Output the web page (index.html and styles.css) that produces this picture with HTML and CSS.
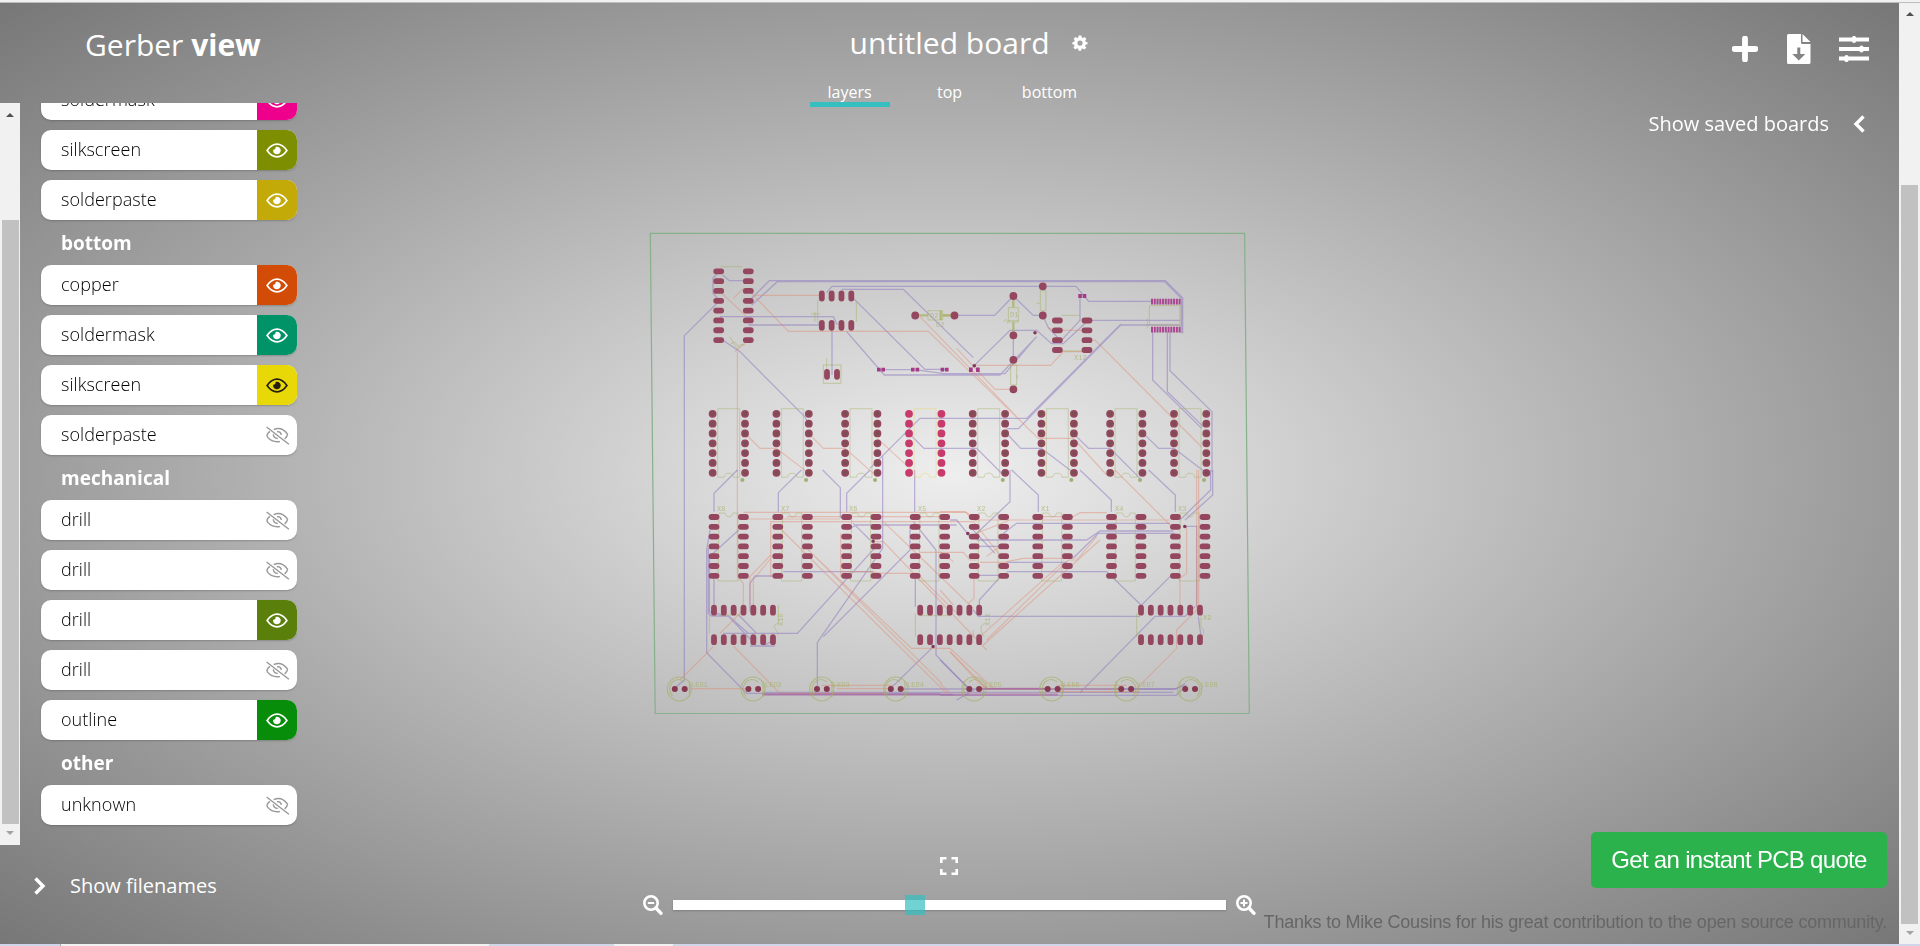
FILE: index.html
```html
<!DOCTYPE html>
<html lang="en">
<head>
<meta charset="utf-8">
<title>Gerber view</title>
<link rel="stylesheet" href="styles.css">
</head>
<body>
<svg class="defs" aria-hidden="true">
  <defs>
    <symbol id="eye" viewBox="0 0 24 18"><path d="M1.2 9Q6 2.1 12 2.1T22.800 9Q18 15.900 12 15.900T1.200 9z" fill="none" stroke="currentColor" stroke-width="1.800"/><path d="M12 4.800a4.200 4.200 0 1 1-4.200 3.300q2.600.7 2.900-3.100Q11.300 4.800 12 4.800z" fill="currentColor"/></symbol>
    <symbol id="eye-off" viewBox="0 0 26 20"><g fill="none" stroke="currentColor" stroke-width="1.500"><path d="M1.500 1L25 19.200M9 3.900Q17-.2 23.600 8.500 23.500 11 20.500 13.600M5 5.700Q.5 9 2.800 12 7.500 17.600 15.500 16.300M12.500 6q4-.5 4.600 3.400M8.600 8.700q.2 4.300 4.700 4.500"/></g></symbol>
  </defs>
</svg>
<div class="top-edge"></div>
<div class="window">
  <div class="view">
    <svg class="board" viewBox="0 0 1899 941">
      <defs>
        <path id="h4" d="M-2.500 0h5m-5 9.830h5m-5 9.830h5m-5 9.830h5"/>
        <path id="h7" d="M-2.500 0h5m-5 9.800h5m-5 9.800h5m-5 9.800h5m-5 9.800h5m-5 9.800h5m-5 9.800h5"/>
        <path id="v4" d="M0-2.500v5m9.830-5v5m9.830-5v5m9.830-5v5"/>
        <path id="v7" d="M0-2.500v5m9.830-5v5m9.830-5v5m9.830-5v5m9.830-5v5m9.830-5v5m9.830-5v5"/>
        <path id="c7" d="M0 0h.01m0 9.830h.01m0 9.830h.01m0 9.830h.01m0 9.830h.01m0 9.830h.01m0 9.830h.01"/>
        <path id="body7" d="M5 63.500V-5H27V63.500H20.500q0-4-4.500-4t-4.500 4H5"/>
        <path id="chip7" d="M5-4H11q1 4 4 4t4-4H24V64H4z"/>
      </defs>
      <g transform="translate(0 -3)">
        <path class="outline" d="M650.300 233.300H1244.600L1249.300 713.500H655.200z"/>
        <g transform="translate(640 225) scale(.33333)">
          <path class="bottom-cu" d="M133 730V332L236 230M248 150L268 167H320M236 140L219 160V205L240 228M330 225L388 167H1576L1628 218V325M335 240L412 170H1574L1624 220V325M560 203L576 184H1308L1346 229H1540M240 275H580L592 300M325 300H545M605 193H790L1000 398M635 215L855 433H920M620 320L733 450H1080L1190 335M240 340L300 380L494 575L506 596M576 300V450M722 434H820M826 434L910 446H1095L1185 340M690 730L840 580H1160L1440 300H1620M1100 611H1135L1445 297M955 271H1064L1120 213L1180 271H1208L1225 308L1260 345M1003 421L1110 316H1190L1235 356H1270L1340 290M1120 331V404M1320 213V286L1255 356M1538 320V465L1685 610M1582 320V500L1690 605M1590 320V437L1716 560V740M1340 286H1620M728 740V690M807 625L852 670H1010L1090 750M1100 625L1142 670H1204L1310 750M1300 625L1346 670H1410L1500 760M1510 625L1556 670H1602L1700 745"/>
          <path class="top-cu" d="M240 200L315 270M280 220L310 190M330 200L445 319H865L1195 640H1300L1400 750M345 211H545M292 380V740M315 625L360 670H409L500 740M506 625L550 670H615L700 745M712 640L820 740M840 275L1130 575M950 370L1065 493H1120M1005 421H1232L1270 380H1340M1340 345H1365L1685 666M1225 308L1240 316H1340M285 380L325 345"/>
          <path class="silk" d="M244 125H306M533 225V295M649 230V290M550 420H603V475H550zM560 465V400M272 357q15-14 23 10 6-12 20-7M512 267H540M525 260V290M864 257H908V285H864zM902 257V285M270 335L293 375"/>
          <path class="lead" d="M836 271H864M908 271H944"/>
        </g>
        <g transform="translate(940 225) scale(.33333)">
          <path class="silk" d="M205 248H235V291H205zM205 287H235M301 197H318V257H301zM212 420H230V480H212zM365 271H420M365 378H430M628 242H720V300H628zM190 290q10-15 12 5M622 310V280M290 235H299M232 450V460"/>
          <path class="lead" d="M2 257V285M8 271H34M220 222V247M220 292V320"/>
        </g>
        <g transform="translate(640 470) scale(.33333)">
          <path class="bottom-cu" d="M133-5V630L104 655M292 0L222 70V125M484 0L415 68V125M548 0L601 53V145M690 0L620 70V125M728 5V235L532 517V655M824 0V125M210 180L200 240V548L320 670H900M296 180L208 260V425L268 440L325 490M222 328V410M205 235V430L215 438H265L350 528H405M708 230L472 490H350L296 435M430 305H700M330 425V340L345 318H430M330 528H370L400 510M355 490H250M640 160L690 210M810 165V240L550 500M820 155L888 240V555L985 655M826 317V410M880 530L752 655M370 667H1600M370 674H940M620 180L650 165H950M990 170L1065 250M1010 655L950 690M782 657H1600L1640 645"/>
          <path class="top-cu" d="M292 0V320L310 340V405M310 127H980L1010 155M392 320V155H1000L1080 255M300 147H600M392 255L330 320V405M400 255L340 330V405M410 165L920 670M440 140H905M500 235L815 535H930L1060 655M525 260L905 640M602 320V190M605 305H690L720 310H830L960 440M730 155L850 270L1000 415M700 215H730L1040 540M840 247H905L940 275M120 630L220 530M150 656H320M280 528L420 670H740M240 490L310 420M545 646H760M930 545L1040 655M590 656H750"/>
          <path class="silk" d="M208 430V490M415 405V460q-18 5-10 15t10 20M826 430V500M840 437H930M240 435H300M1000 480V500"/>
        </g>
        <g transform="translate(940 470) scale(.33333)">
          <path class="bottom-cu" d="M210 0V95L105 195M215 0L295 75V125M420 0L514 90V125M626 0L706 75V125M818 0V75L735 150M812 0V60L720 150M30 150H50L90 200M110 210H440L480 183H700M400 264L475 190H705M190 190L230 160H690M120 229H180M200 277H382M200 305H500L603 405M110 316H185L118 390V410M690 320L600 410M100 420L115 439H600M420 668L645 439H735L765 410M735 169H770V410M775 440L783 500M0 570L88 657M120 657H710L735 640M0 676H708L735 650M530 316H500"/>
          <path class="top-cu" d="M0 125H75L100 150H690M300 140H400L420 128H500M525 0L690 165M776 0V410M770 0V420M740 170V310L720 325V405M0 247H70L90 270H110M120 277H190L250 265H400M110 190L210 150H380M470 200L410 270H385L140 510M480 210L130 525M365 280L120 500M102 320V385L85 400M140 260L190 220M0 360L40 405M30 545L118 640L140 655M120 657H540M350 646H560M350 665H600M590 656L710 535V480L770 420M0 640L30 670"/>
          <path class="silk" d="M590 430V500M135 460q-15 5-12 20t10 20M783 440V470q12 8 5 30"/>
        </g>
        <g class="shared">
          <path class="bus" d="M762 694.500H1058M979 688.700H1048"/>
          <g class="silk">
            <use href="#body7" x="712.700" y="413.700"/><use href="#body7" x="776.300" y="413.700"/><use href="#body7" x="845" y="413.700"/><use href="#body7" x="909" y="413.700" class="warm"/><use href="#body7" x="972.700" y="413.700"/><use href="#body7" x="1041.300" y="413.700"/><use href="#body7" x="1110" y="413.700"/><use href="#body7" x="1174" y="413.700"/>
            <use href="#chip7" x="714" y="517"/><use href="#chip7" x="777.700" y="517"/><use href="#chip7" x="846.700" y="517"/><use href="#chip7" x="915" y="517"/><use href="#chip7" x="974" y="517"/><use href="#chip7" x="1037.700" y="517"/><use href="#chip7" x="1111.300" y="517"/><use href="#chip7" x="1175.300" y="517"/>
          </g>
          <g class="silk leds">
            <circle cx="679.300" cy="689" r="12"/><circle cx="753" cy="689" r="12"/><circle cx="821.700" cy="689" r="12"/><circle cx="895.700" cy="689" r="12"/><circle cx="974" cy="689" r="12"/><circle cx="1051.700" cy="689" r="12"/><circle cx="1126.500" cy="689" r="12"/><circle cx="1189.700" cy="689" r="12"/>
            <path d="M689.500 681v16m-17-1q-6-7 0-14q6-5 12 0M763 681v16m-17-1q-6-7 0-14q6-5 12 0M832 681v16m-17-1q-6-7 0-14q6-5 12 0M905 681v16m-17-1q-6-7 0-14q6-5 12 0M964 681v16m17-1q6-7 0-14q-6-5-12 0M1062 681v16m-17-1q-6-7 0-14q6-5 12 0M1116 681v16m17-1q6-7 0-14q-6-5-12 0M1180 681v16m17-1q6-7 0-14q-6-5-12 0"/>
          </g>
          <g class="part-name">
            <text x="691" y="687">LED1</text><text x="765" y="687">LED2</text><text x="833" y="687">LED3</text><text x="907" y="687">LED4</text><text x="985" y="687">LED5</text><text x="1063" y="687">LED6</text><text x="1138" y="687">LED7</text><text x="1201" y="687">LED8</text>
            <text x="717" y="511">X8</text><text x="781" y="511">X7</text><text x="849" y="511">X6</text><text x="918" y="511">X5</text><text x="977" y="511">X2</text><text x="1041" y="511">X1</text><text x="1115" y="511">X4</text><text x="1178" y="511">X3</text>
            <text transform="translate(783 626) rotate(-90)">X10</text><text transform="translate(990 626) rotate(-90)">X11</text><text x="1203" y="620">X9</text><text x="930" y="317.500">D2</text><text x="1010" y="317">D1</text><text x="936" y="327">D2</text><text x="1074" y="360">X12</text>
          </g>
          <path class="silk-dots" d="M742.300 480h.1M806 480h.1M875 480h.1M1002.700 480h.1M1071.300 480h.1M1140 480h.1M1204 480h.1"/>
          <g class="pad oblong">
            <use href="#h4" x="718.700" y="271.300"/><use href="#h4" x="718.700" y="310.600"/><use href="#h4" x="748.300" y="271.300"/><use href="#h4" x="748.300" y="310.600"/>
            <use href="#v4" x="821.800" y="296"/><use href="#v4" x="821.800" y="325.300"/>
            <path d="M827 371.800v5M837 371.800v5"/>
            <use href="#h4" x="1057.400" y="320.500"/><use href="#h4" x="1087" y="320.500"/>
            <use href="#h7" x="714" y="517"/><use href="#h7" x="743.400" y="517"/><use href="#h7" x="777.800" y="517"/><use href="#h7" x="807.400" y="517"/><use href="#h7" x="846.600" y="517"/><use href="#h7" x="876" y="517"/><use href="#h7" x="915.200" y="517"/><use href="#h7" x="944.700" y="517"/><use href="#h7" x="974.200" y="517"/><use href="#h7" x="1003.700" y="517"/><use href="#h7" x="1037.800" y="517"/><use href="#h7" x="1067.400" y="517"/><use href="#h7" x="1111.500" y="517"/><use href="#h7" x="1141" y="517"/><use href="#h7" x="1175.400" y="517"/><use href="#h7" x="1205" y="517"/>
            <use href="#v7" x="714" y="610.200"/><use href="#v7" x="714" y="639.700"/><use href="#v7" x="920.200" y="610.200"/><use href="#v7" x="920.200" y="639.700"/><use href="#v7" x="1141" y="610.200"/><use href="#v7" x="1141" y="639.700"/>
          </g>
          <g class="pad round">
            <path d="M915.200 315.500h.01M954.500 315.500h.01M1013.400 296h.01M1013.400 335.300h.01M1013.400 359.800h.01M1013.400 389.300h.01M1042.800 286.300h.01M1042.800 315.500h.01"/>
            <use href="#c7" x="712.600" y="413.800"/><use href="#c7" x="745" y="413.800"/><use href="#c7" x="776.400" y="413.800"/><use href="#c7" x="808.800" y="413.800"/><use href="#c7" x="845.100" y="413.800"/><use href="#c7" x="877.400" y="413.800"/><use href="#c7" x="972.700" y="413.800"/><use href="#c7" x="1005.100" y="413.800"/><use href="#c7" x="1041.400" y="413.800"/><use href="#c7" x="1073.900" y="413.800"/><use href="#c7" x="1110.100" y="413.800"/><use href="#c7" x="1142.400" y="413.800"/><use href="#c7" x="1174" y="413.800"/><use href="#c7" x="1206.300" y="413.800"/>
          </g>
          <g class="pad round marked"><use href="#c7" x="909" y="413.800"/><use href="#c7" x="941.400" y="413.800"/></g>
          <g class="pad drill">
            <use href="#c7" x="712.600" y="413.800"/><use href="#c7" x="745" y="413.800"/><use href="#c7" x="776.400" y="413.800"/><use href="#c7" x="808.800" y="413.800"/><use href="#c7" x="845.100" y="413.800"/><use href="#c7" x="877.400" y="413.800"/><use href="#c7" x="972.700" y="413.800"/><use href="#c7" x="1005.100" y="413.800"/><use href="#c7" x="1041.400" y="413.800"/><use href="#c7" x="1073.900" y="413.800"/><use href="#c7" x="1110.100" y="413.800"/><use href="#c7" x="1142.400" y="413.800"/><use href="#c7" x="1174" y="413.800"/><use href="#c7" x="1206.300" y="413.800"/>
          </g>
          <path class="pad led-pad" d="M674.800 689h.01M684.700 689h.01M748.400 689h.01M758.100 689h.01M817 689h.01M826.800 689h.01M890.800 689h.01M900.700 689h.01M969.300 689h.01M979.100 689h.01M1047.700 689h.01M1057.700 689h.01M1121.200 689h.01M1131.100 689h.01M1185.200 689h.01M1195 689h.01"/>
          <path class="pad via" d="M1035 332.700h.01M974.300 365.700h.01M873.100 541.300h.01M967.800 533.500h.01M1184.800 526.500h.01M933.100 646.500h.01"/>
          <path class="smd" d="M877 369.700h3.600m.8 0h3.600M911 369.700h3.600m1 0h3.600M940.600 369.700h3.600m.8 0h3.600M1078.300 296h3.600m.8 0h3.600"/>
          <path class="smd tall" d="M969 369.700h3.700M976 369.700h3.700"/>
          <path class="connector" d="M1151 301.600h29.600M1151 329.700h29.600"/>
        </g>
      </g>
    </svg>

    <header class="header">
      <h1 class="brand">Gerber <b>view</b></h1>
      <div class="board-head">
        <h2 class="board-title">untitled board
          <svg class="gear" viewBox="0 0 16 16"><path fill="currentColor" fill-rule="evenodd" d="M6.600.4h2.800l.4 2 1 .5 1.900-.9 1.700 2-1.200 1.700.3 1.100 2 .5v2l-2 .5-.4 1.100 1.200 1.800-2 1.700-1.700-1-1 .4-.5 1.900H6.500l-.4-1.900-1.100-.5-1.800 1.100-1.800-1.900 1.200-1.700-.4-1-1.800-.5V7.200l1.900-.4.400-1.200L1.700 4l1.700-2 1.900.9 1-.5zM8 5.500a2.600 2.600 0 1 0 0 5.200 2.600 2.600 0 0 0 0-5.200z"/></svg>
        </h2>
        <nav class="tabs"><a class="tab tab-on">layers</a><a class="tab">top</a><a class="tab">bottom</a></nav>
      </div>
      <div class="tools">
        <svg width="26" height="26" viewBox="0 0 26 26"><path d="M13 2.500v21M2.500 13h21" stroke="currentColor" stroke-width="5.800" stroke-linecap="round"/></svg>
        <svg width="24" height="30" viewBox="0 0 24 30"><path fill="currentColor" fill-rule="evenodd" d="M1.500 0H14v8.500q0 1.500 1.500 1.500H23.500V28.500q0 1.500-1.500 1.500H1.500Q0 30 0 28.500V1.500Q0 0 1.500 0zM10.300 13.500v6.500H5.300l6.500 6.500L18.300 20H13.300v-6.500zM15.500 0L23.500 8h-8z"/></svg>
        <svg width="30" height="26" viewBox="0 0 30 26"><path d="M0 3.500h30M0 13h30M0 22.500h30" stroke="currentColor" stroke-width="3.800"/><path d="M15 2v3M22.500 11.500v3M7.500 21v3" stroke="currentColor" stroke-width="4.200" stroke-linecap="round"/></svg>
      </div>
    </header>

    <main class="middle">
      <aside class="layers">
        <div class="scroll layer-scroll"><i class="arrow up"></i><i class="thumb"></i><i class="arrow down dim"></i></div>
        <div class="layer-list">
          <div class="layer"><span class="name">soldermask</span><span class="swatch magenta"><svg class="eye"><use href="#eye"/></svg></span></div>
          <div class="layer"><span class="name">silkscreen</span><span class="swatch olive"><svg class="eye"><use href="#eye"/></svg></span></div>
          <div class="layer"><span class="name">solderpaste</span><span class="swatch gold"><svg class="eye"><use href="#eye"/></svg></span></div>
          <h3 class="group">bottom</h3>
          <div class="layer"><span class="name">copper</span><span class="swatch orange"><svg class="eye"><use href="#eye"/></svg></span></div>
          <div class="layer"><span class="name">soldermask</span><span class="swatch teal"><svg class="eye"><use href="#eye"/></svg></span></div>
          <div class="layer"><span class="name">silkscreen</span><span class="swatch yellow"><svg class="eye"><use href="#eye"/></svg></span></div>
          <div class="layer"><span class="name">solderpaste</span><span class="swatch off"><svg class="eye-off"><use href="#eye-off"/></svg></span></div>
          <h3 class="group">mechanical</h3>
          <div class="layer"><span class="name">drill</span><span class="swatch off"><svg class="eye-off"><use href="#eye-off"/></svg></span></div>
          <div class="layer"><span class="name">drill</span><span class="swatch off"><svg class="eye-off"><use href="#eye-off"/></svg></span></div>
          <div class="layer"><span class="name">drill</span><span class="swatch moss"><svg class="eye"><use href="#eye"/></svg></span></div>
          <div class="layer"><span class="name">drill</span><span class="swatch off"><svg class="eye-off"><use href="#eye-off"/></svg></span></div>
          <div class="layer"><span class="name">outline</span><span class="swatch green"><svg class="eye"><use href="#eye"/></svg></span></div>
          <h3 class="group">other</h3>
          <div class="layer"><span class="name">unknown</span><span class="swatch off"><svg class="eye-off"><use href="#eye-off"/></svg></span></div>
        </div>
      </aside>
      <div class="saved">Show saved boards
        <svg width="12" height="18" viewBox="0 0 12 18"><path d="M10.500 1.500L3 9l7.500 7.500" fill="none" stroke="currentColor" stroke-width="3.400"/></svg>
      </div>
    </main>

    <footer class="footer">
      <div class="filenames">
        <svg width="12" height="18" viewBox="0 0 12 18"><path d="M1.500 1.500L9 9l-7.500 7.500" fill="none" stroke="currentColor" stroke-width="3.400"/></svg>
        Show filenames
      </div>
      <div class="zoom">
        <svg class="fit" width="18" height="18" viewBox="0 0 18 18"><path d="M1.300 6V1.300H6.500M11.500 1.300H16.700V6M16.700 12v4.700H11.500M6.500 16.700H1.300V12" fill="none" stroke="currentColor" stroke-width="2.600"/></svg>
        <div class="zoom-row">
          <svg width="20" height="20" viewBox="0 0 20 20"><circle cx="8" cy="8" r="6.700" fill="none" stroke="currentColor" stroke-width="2.600"/><path d="M13 13l5 5.300" stroke="currentColor" stroke-width="3.400" stroke-linecap="round"/><path d="M4.800 8h6.400" stroke="currentColor" stroke-width="2"/></svg>
          <div class="slider"><div class="knob"></div></div>
          <svg width="20" height="20" viewBox="0 0 20 20"><circle cx="8" cy="8" r="6.700" fill="none" stroke="currentColor" stroke-width="2.600"/><path d="M13 13l5 5.300" stroke="currentColor" stroke-width="3.400" stroke-linecap="round"/><path d="M4.500 8h7M8 4.500v7" stroke="currentColor" stroke-width="2"/></svg>
        </div>
      </div>
    </footer>
    <div class="quote">
      <a class="quote-button">Get an instant PCB quote</a>
      <p class="thanks">Thanks to Mike Cousins for his great contribution to the open source community.</p>
    </div>
  </div>
  <div class="scroll page-scroll"><i class="arrow up"></i><i class="thumb"></i><i class="arrow down dim"></i></div>
</div>
<div class="bottom-edge"></div>
</body>
</html>
```
FILE: styles.css
```css
* { box-sizing: border-box; }
body {
  margin: 0;
  width: 1920px;
  height: 946px;
  overflow: hidden;
  display: flex;
  flex-direction: column;
  font-family: "Open Sans", sans-serif;
  color: #fff;
}
h1, h2, h3, p { margin: 0; font-weight: 400; }
svg { flex: none; display: block; }
.defs { position: absolute; width: 0; height: 0; }
.top-edge { height: 3px; background: #f1f1f1; border-bottom: 1px solid #bdbdbd; }
.bottom-edge { height: 2px; background: linear-gradient(90deg, #cfd6ea 60px, #aaa 60px 61px, #f2f2f2 61px 489px, #cfd6ea 489px 614px, #f2f2f2 614px 673px, #cfd6ea 673px); }
.window { display: flex; height: 941px; }
.view {
  position: relative;
  width: 1899px;
  display: grid;
  grid-template-rows: 100px 742px 99px;
  background: radial-gradient(ellipse farthest-corner at center, #eee 0%, #777 100%);
}

/* scrollbars */
.scroll { display: flex; flex-direction: column; align-items: center; background: #f1f1f1; }
.thumb { width: 17px; background: #c1c1c1; }
.arrow { width: 0; height: 0; border: 4.500px solid transparent; }
.up { border-bottom-color: #505050; border-top: 0; }
.down { border-top-color: #505050; border-bottom: 0; }
.dim { border-top-color: #a3a3a3; }
.layer-scroll { width: 20px; height: 742px; padding-top: 10px; }
.layer-scroll .thumb { height: 604px; margin: 102.500px 0 7px; }
.page-scroll { width: 21px; padding-top: 9px; }
.page-scroll .thumb { height: 739px; margin: 168.500px 0 7px; }

/* header */
.header { display: grid; grid-template-columns: 1fr 400px 1fr; }
.brand { padding: 21px 0 0 85px; font-size: 30px; line-height: 41px; }
.board-head { display: flex; flex-direction: column; align-items: center; padding-top: 19px; }
.board-title { position: relative; font-size: 30px; line-height: 41px; }
.gear { position: absolute; left: 100%; top: 13px; margin-left: 22px; width: 16px; height: 16px; }
.tabs { display: flex; gap: 20px; padding-top: 14px; }
.tab { width: 80px; height: 30px; text-align: center; font-size: 16px; line-height: 30px; }
.tab-on { border-bottom: 5px solid #35bfc0; }
.tools { display: flex; justify-content: flex-end; align-items: center; gap: 29px; padding: 0 30px 12px 0; }
.tools svg:last-child { margin-left: -1px; }

/* layer list */
.middle { display: flex; justify-content: space-between; min-height: 0; position: relative; }
.layers { display: flex; overflow: hidden; }
.layer-list { width: 277px; padding: 0 0 0 21px; margin-top: -23px; }
.layer { display: flex; width: 256px; height: 40px; margin-bottom: 10px; border-radius: 10px; background: #fff; overflow: hidden; box-shadow: 0 1px 2px rgba(0, 0, 0, .2); }
.name { flex: 1; padding-left: 20px; color: #000; font-weight: 300; font-size: 18px; line-height: 38px; letter-spacing: .05px; }
.swatch { width: 40px; display: flex; align-items: center; justify-content: center; color: #fff; }
.eye { width: 22px; height: 17px; }
.eye-off { width: 25px; height: 19px; margin-left: 1px; }
.group { height: 35px; padding-left: 20px; font-size: 19px; font-weight: 700; line-height: 26px; }
.magenta { background: #ee008c; }
.olive { background: #7d8f00; }
.gold { background: #c4aa08; }
.orange { background: #d34c07; }
.teal { background: #009367; }
.yellow { background: #e8d808; color: #241f10; }
.moss { background: #5a800b; }
.green { background: #078d09; }
.off { color: #999; }
.saved { display: flex; align-items: center; gap: 24px; height: 27px; margin: 7px 34px 0 0; font-size: 20px; }

/* footer */
.footer { display: grid; grid-template-columns: 1fr 613px 1fr; }
.filenames { display: flex; align-items: center; gap: 24px; height: 27px; padding-left: 34px; margin-top: 27px; font-size: 20px; }
.zoom { display: flex; flex-direction: column; align-items: center; gap: 20px; padding-top: 12px; position: relative; }
.fit { margin-right: 1px; }
.zoom-row { display: flex; align-items: center; gap: 10px; width: 613px; }
.slider { flex: 1; height: 10px; background: #fff; box-shadow: 0 1px 2px rgba(0, 0, 0, .2); }
.knob { width: 20px; height: 20px; margin: -5px 0 0 232px; background: rgba(53, 191, 192, .7); }

/* quote block floats over the lower right of the view */
.quote { position: absolute; right: 12px; bottom: 9px; display: flex; flex-direction: column; align-items: flex-end; font-family: "Liberation Sans", sans-serif; }
.quote-button { width: 296px; height: 56px; border-radius: 5px; background: #2bb24c; font-size: 24px; line-height: 55px; text-align: center; letter-spacing: -.7px; }
.thanks { margin-top: 22px; color: #666; font-size: 18px; line-height: 25px; white-space: nowrap; letter-spacing: -.21px; }

/* board drawing */
.board { position: absolute; left: 0; top: 0; width: 1899px; height: 941px; }
.board path, .board circle { fill: none; }
.outline { stroke: #86b18b; stroke-width: 1.200; }
.bottom-cu { stroke: #8a74bd; stroke-width: 3.800; opacity: .5; }
.top-cu { stroke: #e08568; stroke-width: 3.400; opacity: .42; }
.silk { stroke: #a3b060; stroke-width: 2.800; opacity: .55; }
.lead { stroke: #adb36c; stroke-width: 7; opacity: .8; }
.shared .silk { stroke-width: .8; }
.shared .leds { stroke-width: 1.100; opacity: .65; }
.warm { stroke: #e6d85c; }
.bus { stroke: #a8508f; stroke-width: 1.800; opacity: .5; }
.part-name { fill: #a3b060; opacity: .65; font: 7px "Liberation Mono", monospace; }
.silk-dots { stroke: #9db377; stroke-width: 4; stroke-linecap: round; }
.pad { stroke: #94475e; stroke-linecap: round; }
.oblong { stroke-width: 5.800; }
.round { stroke-width: 7.800; }
.marked { stroke: #c73a6b; }
.drill { stroke: #75504e; stroke-width: 4; opacity: .8; }
.led-pad { stroke-width: 6; stroke: #87394f; }
.via { stroke-width: 3.600; stroke: #81395a; }
.smd { stroke: #a33b87; stroke-width: 3.800; }
.tall { stroke-width: 4.600; }
.connector { stroke: #a84790; stroke-width: 5.800; stroke-dasharray: 2 .76; }
```
